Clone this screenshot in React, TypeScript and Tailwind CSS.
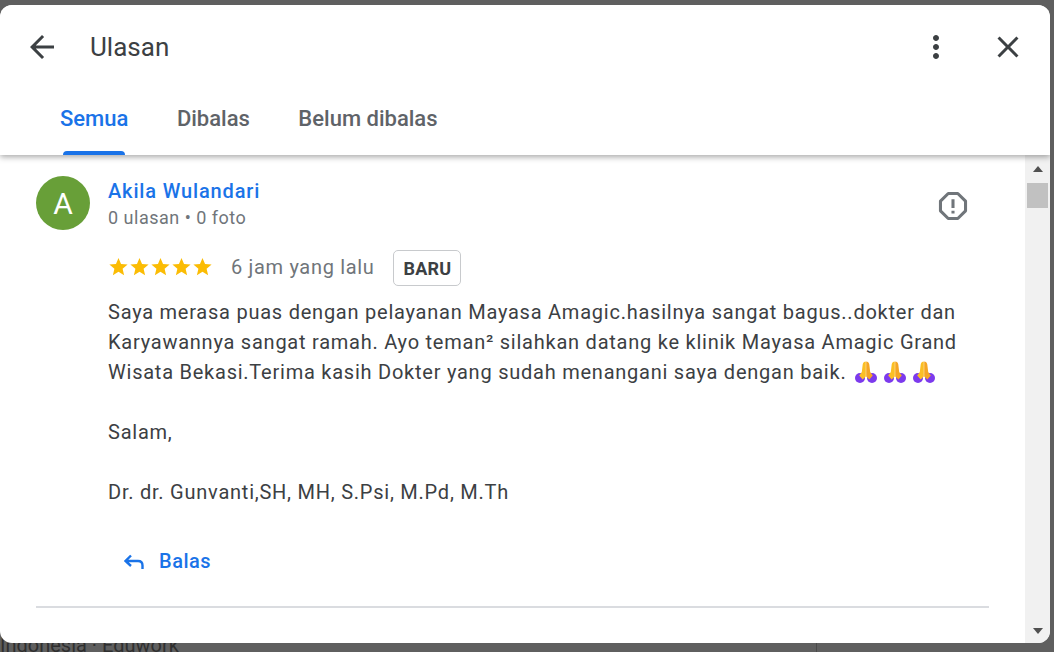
const tabs = ['Semua', 'Dibalas', 'Belum dibalas'];

function Star() {
  return (
    <svg viewBox="0 0 24 24" className="h-[21px] w-[21px] fill-[#fbbc04]">
      <path d="M12 2.2l2.9 6.9 7.5.6-5.7 4.9 1.7 7.3L12 18.1l-6.4 3.8 1.7-7.3L1.6 9.7l7.5-.6z" />
    </svg>
  );
}

function Pray() {
  return (
    <svg viewBox="0 0 22 22" className="h-[22px] w-[22px]">
      <circle cx="5" cy="17" r="5" fill="#7c3aed" />
      <circle cx="17" cy="17" r="5" fill="#7c3aed" />
      <path d="M10.8 15.5L7.6 18.5 4.2 14.5l2.6-3.5.9-7.5C8 1.8 9.2.5 10.8.5z" fill="#fbbf24" />
      <path d="M11.2 15.5l3.2 3 3.4-4-2.6-3.5-.9-7.5C14 1.8 12.8.5 11.2.5z" fill="#f5a623" />
    </svg>
  );
}

export default function App() {
  return (
    <div className="relative h-[652px] w-[1054px] overflow-hidden bg-[#5f5f5f] pt-[5px] font-['Roboto',sans-serif]">
      {/* halaman di belakang dialog */}
      <div className="absolute left-0 top-[631px] text-[20px] leading-[28px] text-[#2f2f2f]">Indonesia · Eduwork</div>
      <div className="absolute left-[816px] top-[643px] h-[9px] w-px bg-[#4a4a4a]" />

      <div className="relative flex h-[638px] w-[1050px] flex-col overflow-hidden rounded-[12px] bg-white">
        <div className="relative z-10 h-[150px] shrink-0 bg-white shadow-[0_2px_6px_rgba(0,0,0,0.35)]">
          <div className="flex h-[84px] items-center pl-[24px] pr-[24px]">
            <svg viewBox="0 0 24 24" className="h-[36px] w-[36px] fill-[#3c4043]">
              <path d="M20 11H7.83l5.59-5.59L12 4l-8 8 8 8 1.41-1.41L7.83 13H20v-2z" />
            </svg>
            <span className="ml-[30px] flex-1 text-[26px] text-[#3c4043]">Ulasan</span>
            <svg viewBox="0 0 24 24" className="mr-[36px] h-[36px] w-[36px] fill-[#3c4043]">
              <path d="M12 8c1.1 0 2-.9 2-2s-.9-2-2-2-2 .9-2 2 .9 2 2 2zm0 2c-1.1 0-2 .9-2 2s.9 2 2 2 2-.9 2-2-.9-2-2-2zm0 6c-1.1 0-2 .9-2 2s.9 2 2 2 2-.9 2-2-.9-2-2-2z" />
            </svg>
            <svg viewBox="0 0 24 24" className="h-[36px] w-[36px] fill-[#3c4043]">
              <path d="M19 6.41L17.59 5 12 10.59 6.41 5 5 6.41 10.59 12 5 17.59 6.41 19 12 13.41 17.59 19 19 17.59 13.41 12z" />
            </svg>
          </div>
          <div className="flex h-[66px] gap-[48.5px] pl-[60px]">
            {tabs.map((t, i) => (
              <div key={t} className={`relative pt-[15px] text-[22px] font-medium leading-[30px] ${i === 0 ? 'text-[#1a73e8]' : 'text-[#5f6368]'}`}>
                {t}
                {i === 0 && <div className="absolute bottom-0 left-[3px] right-[3px] h-[4px] rounded-t-[4px] bg-[#1a73e8]" />}
              </div>
            ))}
          </div>
        </div>

        <div className="flex min-h-0 flex-1">
          <div className="flex-1 pl-[36px] pr-[36px] pt-[21px]">
            <div className="flex">
              <div className="flex h-[54px] w-[54px] items-center justify-center rounded-full bg-[#689f38] text-[30px] text-white">A</div>
              <div className="ml-[18px] flex-1">
                <div className="mt-px text-[20px] font-medium leading-[28px] tracking-[0.85px] text-[#1a73e8]">Akila Wulandari</div>
                <div className="text-[18px] leading-[26px] tracking-[0.5px] text-[#70757a]">0 ulasan • 0 foto</div>
              </div>
              <svg viewBox="0 0 24 24" className="mr-[20px] mt-[14px] h-[32px] w-[32px] fill-none stroke-[#70757a] stroke-[2.3]">
                <path d="M8.4 2.6h7.2l5.8 5.8v7.2l-5.8 5.8H8.4l-5.8-5.8V8.4z" strokeLinejoin="round" />
                <path d="M12 7v6.5M12 15.6v2" />
              </svg>
            </div>

            <div className="ml-[72px]">
              <div className="mt-[19px] flex items-center">
                <div className="mb-[3px] flex">
                  <Star /><Star /><Star /><Star /><Star />
                </div>
                <span className="mb-[2px] ml-[18px] text-[20px] tracking-[0.67px] text-[#70757a]">6 jam yang lalu</span>
                <span className="ml-[19px] flex h-[36px] items-center rounded-[5px] border border-[#c8cacd] px-[9px] text-[18px] font-bold tracking-[0.2px] text-[#3c4043]">BARU</span>
              </div>
              <div className="mt-[11px] text-[20px] leading-[30px] tracking-[0.76px] text-[#3c4043]">
                <p>Saya merasa puas dengan pelayanan Mayasa Amagic.hasilnya sangat bagus..dokter dan</p>
                <p>Karyawannya sangat ramah. Ayo teman² silahkan datang ke klinik Mayasa Amagic Grand</p>
                <p className="flex items-center">
                  Wisata Bekasi.Terima kasih Dokter yang sudah menangani saya dengan baik.
                  <span className="ml-[9px] flex gap-[7px]"><Pray /><Pray /><Pray /></span>
                </p>
                <p className="mt-[30px]">Salam,</p>
                <p className="mt-[30px]">Dr. dr. Gunvanti,SH, MH, S.Psi, M.Pd, M.Th</p>
              </div>
              <div className="ml-[14px] mt-[39px] flex items-center gap-[13px] text-[20px] font-medium leading-[30px] tracking-[0.5px] text-[#1a73e8]">
                <svg viewBox="0 0 24 24" className="h-[24px] w-[24px] fill-none stroke-[#1a73e8] stroke-[2.4]">
                  <path d="M9 6.5L3.5 12 9 17M3.5 12H16c3 0 4.5 2 4.5 4.5V20" />
                </svg>
                Balas
              </div>
            </div>
            <div className="mt-[30px] h-[2px] bg-[#dadce0]" />
          </div>

          {/* scrollbar */}
          <div className="flex w-[25px] flex-col items-center bg-[#f1f1f1]">
            <div className="mt-[11px] h-0 w-0 border-x-[5.5px] border-b-[6px] border-x-transparent border-b-[#505050]" />
            <div className="mt-[11px] h-[25px] w-[21px] bg-[#c1c1c1]" />
            <div className="mt-auto mb-[9px] h-0 w-0 border-x-[5.5px] border-t-[6px] border-x-transparent border-t-[#505050]" />
          </div>
        </div>
      </div>
    </div>
  );
}
